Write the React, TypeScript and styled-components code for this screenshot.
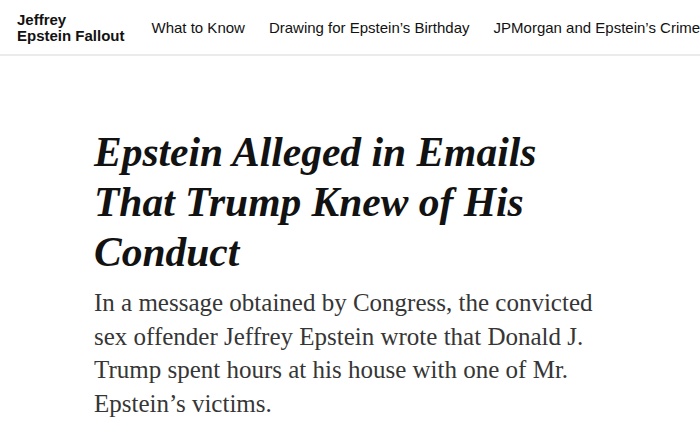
import React from "react";
import styled, { createGlobalStyle } from "styled-components";

const GlobalStyle = createGlobalStyle`
  html, body {
    margin: 0;
    padding: 0;
    background: #ffffff;
  }
  body {
    width: 700px;
    height: 443px;
    overflow: hidden;
  }
`;

const navItems = [
  "What to Know",
  "Drawing for Epstein\u2019s Birthday",
  "JPMorgan and Epstein\u2019s Crimes",
];

const App: React.FC = () => {
  return (
    <Page>
      <GlobalStyle />
      <TopBar>
        <Label>
          Jeffrey
          <br />
          Epstein Fallout
        </Label>
        <Divider />
        <Nav>
          {navItems.map((item) => (
            <NavLink key={item}>{item}</NavLink>
          ))}
        </Nav>
      </TopBar>
      <Article>
        <Headline>Epstein Alleged in Emails That Trump Knew of His Conduct</Headline>
        <Summary>
          In a message obtained by Congress, the convicted sex offender Jeffrey
          Epstein wrote that Donald J. Trump spent hours at his house with one
          of Mr. Epstein&rsquo;s victims.
        </Summary>
      </Article>
    </Page>
  );
};

export default App;

const Page = styled.div`
  width: 700px;
  height: 443px;
  overflow: hidden;
  background: #fff;
`;

const TopBar = styled.header`
  display: flex;
  align-items: center;
  height: 54px;
  padding-left: 17px;
  border-bottom: 2px solid #ebebeb;
  white-space: nowrap;
  overflow: hidden;
`;

const Label = styled.div`
  font-family: "Liberation Sans", Arial, sans-serif;
  font-weight: 700;
  font-size: 15px;
  line-height: 16px;
  color: #121212;
  padding-top: 2px;
`;

const Divider = styled.div`
  width: 1px;
  height: 32px;
  background: #e2e2e2;
  margin: 0 13px 0 14px;
`;

const Nav = styled.nav`
  display: flex;
  gap: 24px;
`;

const NavLink = styled.a`
  font-family: "Liberation Sans", Arial, sans-serif;
  font-size: 15px;
  color: #121212;
  cursor: pointer;
`;

const Article = styled.main`
  padding: 71px 0 0 94px;
`;

const Headline = styled.h1`
  margin: 0;
  max-width: 460px;
  font-family: "Liberation Serif", "Times New Roman", serif;
  font-style: italic;
  font-weight: 700;
  font-size: 41.5px;
  line-height: 50px;
  color: #121212;
`;

const Summary = styled.p`
  margin: 9px 0 0;
  max-width: 512px;
  font-family: "Liberation Serif", "Times New Roman", serif;
  font-size: 25px;
  line-height: 33.5px;
  color: #363636;
`;
